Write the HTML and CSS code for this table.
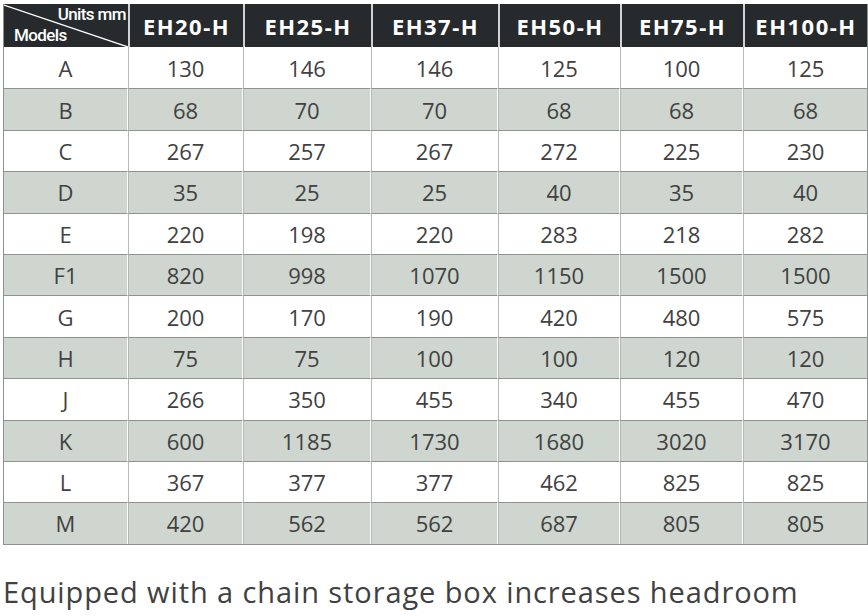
FILE: index.html
```html
<!DOCTYPE html>
<html lang="en">
<head>
<meta charset="utf-8">
<link rel="stylesheet" href="styles.css">
</head>
<body>
<div class="page">
<table class="spec">
<colgroup>
<col class="c0"><col class="c1"><col class="c2"><col class="c3"><col class="c4"><col class="c5"><col class="c6">
</colgroup>
<thead>
<tr>
<th class="corner">
<svg class="diag" viewBox="0 0 125 43" preserveAspectRatio="none"><line x1="0" y1="1" x2="125" y2="43" stroke="#ffffff" stroke-width="1.3"/></svg>
<span class="units">Units mm</span>
<span class="models">Models</span>
</th>
<th>EH20-H</th><th>EH25-H</th><th>EH37-H</th><th>EH50-H</th><th>EH75-H</th><th>EH100-H</th>
</tr>
</thead>
<tbody>
<tr><td>A</td><td>130</td><td>146</td><td>146</td><td>125</td><td>100</td><td>125</td></tr>
<tr class="alt"><td>B</td><td>68</td><td>70</td><td>70</td><td>68</td><td>68</td><td>68</td></tr>
<tr><td>C</td><td>267</td><td>257</td><td>267</td><td>272</td><td>225</td><td>230</td></tr>
<tr class="alt"><td>D</td><td>35</td><td>25</td><td>25</td><td>40</td><td>35</td><td>40</td></tr>
<tr><td>E</td><td>220</td><td>198</td><td>220</td><td>283</td><td>218</td><td>282</td></tr>
<tr class="alt"><td>F1</td><td>820</td><td>998</td><td>1070</td><td>1150</td><td>1500</td><td>1500</td></tr>
<tr><td>G</td><td>200</td><td>170</td><td>190</td><td>420</td><td>480</td><td>575</td></tr>
<tr class="alt"><td>H</td><td>75</td><td>75</td><td>100</td><td>100</td><td>120</td><td>120</td></tr>
<tr><td>J</td><td>266</td><td>350</td><td>455</td><td>340</td><td>455</td><td>470</td></tr>
<tr class="alt"><td>K</td><td>600</td><td>1185</td><td>1730</td><td>1680</td><td>3020</td><td>3170</td></tr>
<tr><td>L</td><td>367</td><td>377</td><td>377</td><td>462</td><td>825</td><td>825</td></tr>
<tr class="alt"><td>M</td><td>420</td><td>562</td><td>562</td><td>687</td><td>805</td><td>805</td></tr>
</tbody>
</table>
<p class="note">Equipped with a chain storage box increases headroom</p>
</div>
</body>
</html>
```

FILE: styles.css
```css
html, body {
  margin: 0;
  padding: 0;
  background: #ffffff;
}

.page {
  padding: 4px 2px 0 3px;
  font-family: "Open Sans", "Noto Sans", sans-serif;
}

.spec {
  width: 863px;
  table-layout: fixed;
  border-collapse: separate;
  border-spacing: 0;
  border-left: 1px solid #8e938f;
  border-right: 1px solid #8e938f;
  border-bottom: 1px solid #8e938f;
}

.c0 { width: 124px; }
.c1 { width: 115px; }
.c2 { width: 128px; }
.c3 { width: 127px; }
.c4 { width: 122px; }
.c5 { width: 123px; }
.c6 { width: 124px; }

.spec th {
  height: 43px;
  padding: 0;
  box-sizing: border-box;
  background: #262a2d;
  color: #ffffff;
  font-family: "Noto Sans", "Open Sans", sans-serif;
  font-weight: 700;
  font-size: 22px;
  letter-spacing: 1.5px;
  text-align: center;
  vertical-align: middle;
  border-left: 2px solid #cfd2d0;
}

.spec th:first-child {
  border-left: none;
}

.spec th.corner {
  position: relative;
  font-family: Roboto, "Noto Sans", sans-serif;
  font-weight: 500;
  font-size: 17px;
  letter-spacing: -0.6px;
}

.diag {
  position: absolute;
  left: 0;
  top: 0;
  width: 100%;
  height: 100%;
}

.units {
  position: absolute;
  right: 2px;
  top: 0;
  line-height: 20px;
}

.models {
  position: absolute;
  left: 10px;
  bottom: 2px;
  line-height: 20px;
}

.spec td {
  height: 41.4px;
  padding: 0;
  box-sizing: border-box;
  text-align: center;
  vertical-align: middle;
  font-size: 22px;
  color: #414141;
  background: #ffffff;
  border-top: 1px solid #8e938f;
  border-left: 1px solid #b4b9b5;
  border-right: 1px solid #ffffff;
}

.spec tbody tr:first-child td {
  border-top: none;
}

.spec td:first-child {
  border-left: none;
}

.spec td:last-child {
  border-right: none;
}

.spec tr.alt td {
  background: #ced6cf;
}

.note {
  margin: 27px 0 0 0;
  font-size: 29px;
  color: #414141;
  letter-spacing: 0.9px;
}
```
